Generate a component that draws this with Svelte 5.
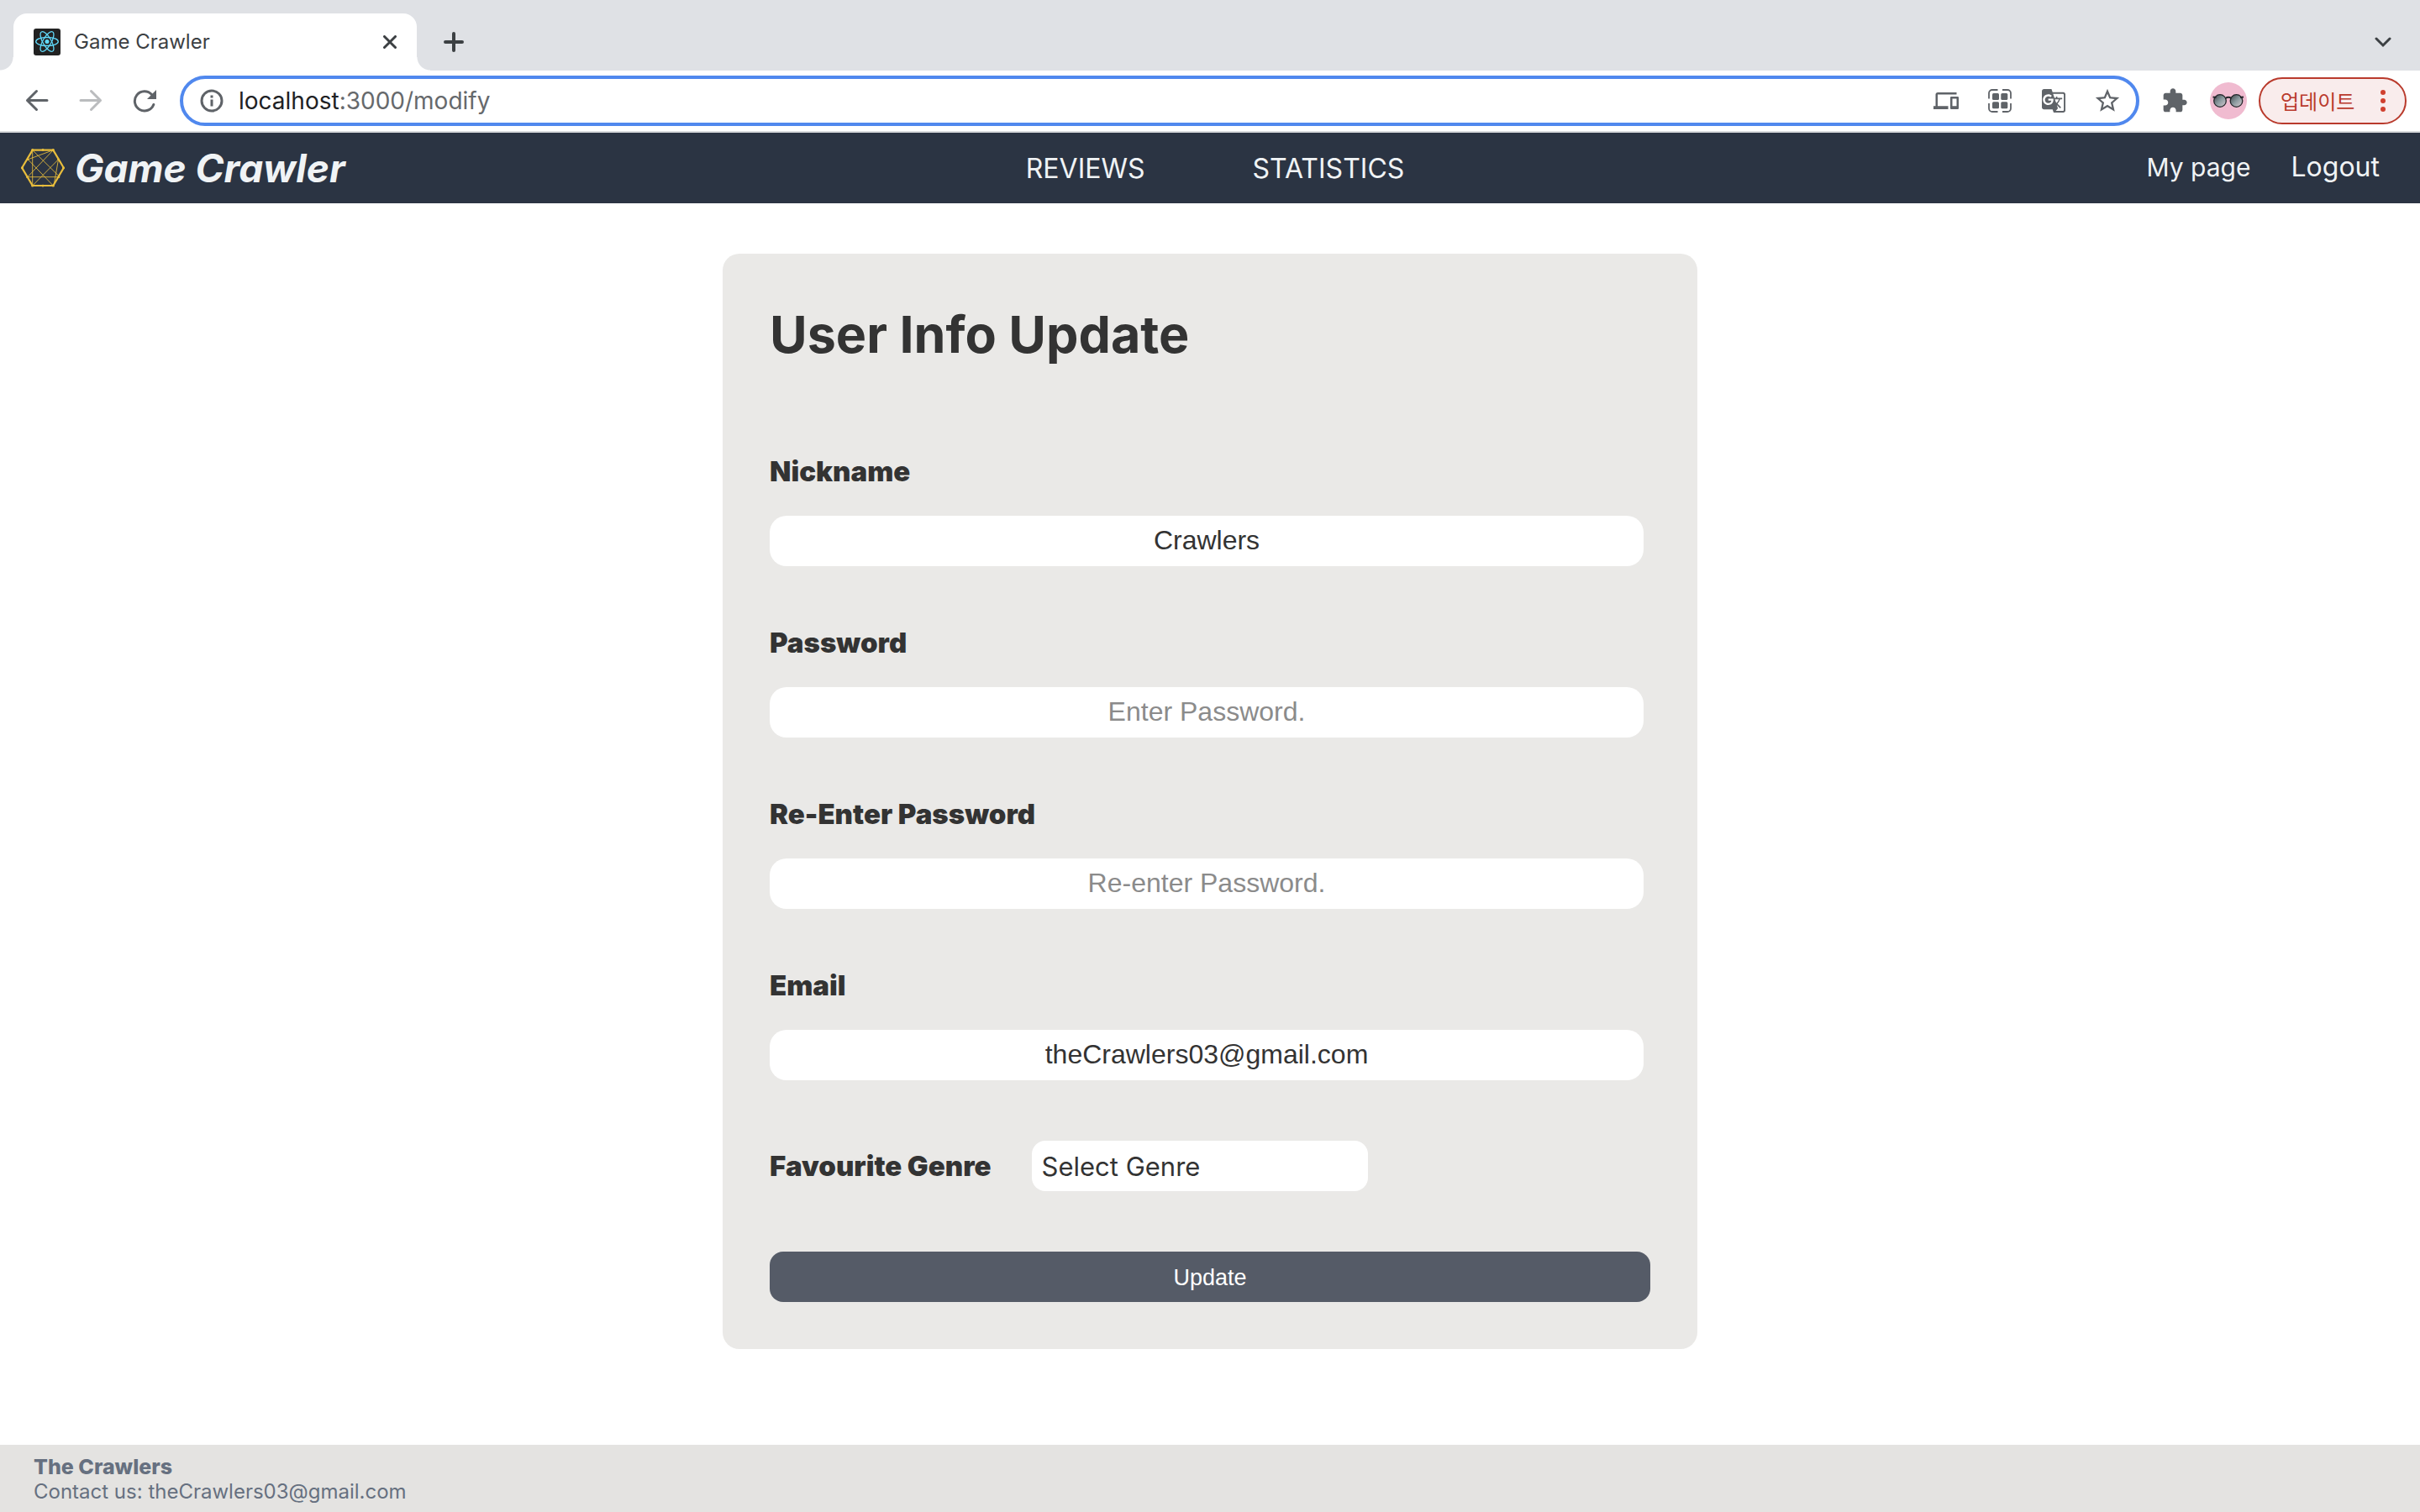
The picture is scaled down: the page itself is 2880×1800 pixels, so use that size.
<script lang="ts">
  let nickname = $state('Crawlers');
  let password = $state('');
  let passwordAgain = $state('');
  let email = $state('theCrawlers03@gmail.com');
  let genre = $state('');
  const genres = ['Action', 'Adventure', 'Puzzle', 'Strategy'];

  function submit(event: SubmitEvent) {
    event.preventDefault();
  }
</script>

<div class="window">
  <div class="tab-strip">
    <span class="curve left"></span>
    <div class="tab">
      <svg class="favicon" viewBox="0 0 32 32" aria-hidden="true">
        <rect width="32" height="32" rx="3" fill="#222" />
        <g fill="none" stroke="#61dafb" stroke-width="1.3">
          <ellipse cx="16" cy="15.5" rx="13.3" ry="5" />
          <ellipse cx="16" cy="15.5" rx="13.3" ry="5" transform="rotate(60 16 15.5)" />
          <ellipse cx="16" cy="15.5" rx="13.3" ry="5" transform="rotate(120 16 15.5)" />
        </g>
        <circle cx="16" cy="15.5" r="2.5" fill="#61dafb" />
      </svg>
      <span class="tab-title">Game Crawler</span>
      <button class="plain close" aria-label="Close tab">
        <svg width="16" height="16" viewBox="0 0 16 16"><path d="M1.5 1.5l13 13M14.5 1.5l-13 13" /></svg>
      </button>
    </div>
    <span class="curve right"></span>
    <button class="plain new-tab" aria-label="New tab">
      <svg width="24" height="24" viewBox="0 0 24 24"><path d="M12 2v20M2 12h20" /></svg>
    </button>
    <button class="plain tab-search" aria-label="Search tabs">
      <svg width="20" height="20" viewBox="0 0 20 20"><path d="M2 6l8 8 8-8" /></svg>
    </button>
  </div>

  <div class="toolbar">
    <div class="history">
      <button class="plain" aria-label="Back">
        <svg width="28" height="28" viewBox="0 0 28 28"><path class="line" d="M26 13.5H2.5M13.5 2.5l-11 11 11 11" /></svg>
      </button>
      <button class="plain forward" aria-label="Forward">
        <svg width="28" height="28" viewBox="0 0 28 28"><path class="line" d="M2 13.5h23.5M14.5 2.5l11 11-11 11" /></svg>
      </button>
      <button class="plain" aria-label="Reload">
        <svg width="28" height="28" viewBox="0 0 28 28">
          <path class="line" d="M22.5 6.5A11.6 11.6 0 1 0 24.8 18.5" />
          <path d="M28 1v11H17z" fill="#5f6368" />
        </svg>
      </button>
    </div>

    <div class="omnibox">
      <button class="plain info" aria-label="Site information">
        <svg width="28" height="28" viewBox="0 0 28 28">
          <circle class="line" cx="14" cy="14" r="12" />
          <path d="M12.5 7.5h3v3h-3zM12.5 12.5h3v8h-3z" fill="#5f6368" />
        </svg>
      </button>
      <div class="url"><span class="host">localhost</span>:3000/modify</div>
      <div class="page-actions">
        <button class="plain" aria-label="Send to your devices">
          <svg width="30" height="30" viewBox="0 0 24 24"><path fill="#5f6368" d="M4 6h18V4H4c-1.1 0-2 .9-2 2v11H0v3h14v-3H4V6zm19 2h-6c-.55 0-1 .45-1 1v10c0 .55.45 1 1 1h6c.55 0 1-.45 1-1V9c0-.55-.45-1-1-1zm-1 9h-4v-7h4v7z" /></svg>
        </button>
        <button class="plain" aria-label="Create QR code">
          <svg width="28" height="28" viewBox="0 0 28 28">
            <g fill="#5f6368">
              <rect x="5" y="5" width="8" height="8" rx="1.5" />
              <rect x="15.3" y="5" width="8" height="8" rx="1.5" />
              <rect x="5" y="15.3" width="8" height="8" rx="1.5" />
              <rect x="15.3" y="15.3" width="8" height="8" rx="1.5" />
            </g>
            <path fill="none" stroke="#5f6368" stroke-width="1.8" d="M11.5 1H5a4 4 0 0 0-4 4v6.5M17 1h6a4 4 0 0 1 4 4v6.5M11.5 27H5a4 4 0 0 1-4-4v-6M17 27h6a4 4 0 0 0 4-4v-6" />
          </svg>
        </button>
        <button class="plain" aria-label="Translate this page">
          <svg width="28" height="28" viewBox="1 1 22 22"><path fill="#5f6368" d="M21 4H11l-1-3H3c-1.1 0-2 .9-2 2v15c0 1.1.9 2 2 2h8l1 3h9c1.1 0 2-.9 2-2V6c0-1.1-.9-2-2-2zM7 16c-2.76 0-5-2.24-5-5s2.24-5 5-5c1.35 0 2.48.5 3.35 1.3L9.03 8.57c-.38-.36-1.04-.78-2.03-.78-1.74 0-3.15 1.44-3.15 3.21S5.26 14.21 7 14.21c2.01 0 2.84-1.44 2.92-2.41H7v-1.71h4.68c.07.31.12.61.12 1.02C11.8 13.97 9.89 16 7 16zm6.17-5.42h3.7c-.43 1.25-1.11 2.43-2.05 3.47-.31-.35-.6-.72-.86-1.1l-.79-2.37zm8.33 9.92c0 .55-.45 1-1 1H14l2-2.5-1.04-3.1 3.1 3.1.92-.92-3.3-3.25.02-.02c1.13-1.25 1.93-2.69 2.4-4.22H20v-1.3h-4.53V8h-1.29v1.29h-1.44L11.46 5.5h9.04c.55 0 1 .45 1 1v14z" /></svg>
        </button>
        <button class="plain" aria-label="Bookmark this page">
          <svg width="34" height="34" viewBox="0 0 24 24"><path fill="#5f6368" d="M22 9.24l-7.19-.62L12 2 9.19 8.63 2 9.24l5.46 4.73L5.82 21 12 17.27 18.18 21l-1.63-7.03L22 9.24zM12 15.4l-3.76 2.27 1-4.28-3.32-2.88 4.38-.38L12 6.1l1.71 4.04 4.38.38-3.32 2.88 1 4.28L12 15.4z" /></svg>
        </button>
      </div>
    </div>

    <button class="plain" aria-label="Extensions">
      <svg width="32" height="32" viewBox="0 0 24 24"><path fill="#5f6368" d="M20.5 11H19V7c0-1.1-.9-2-2-2h-4V3.5C13 2.12 11.88 1 10.5 1S8 2.12 8 3.5V5H4c-1.1 0-1.99.9-1.99 2v3.8H3.5c1.49 0 2.7 1.21 2.7 2.7s-1.21 2.7-2.7 2.7H2V20c0 1.1.9 2 2 2h3.8v-1.5c0-1.49 1.21-2.7 2.7-2.7 1.49 0 2.7 1.21 2.7 2.7V22H17c1.1 0 2-.9 2-2v-4h1.5c1.38 0 2.5-1.12 2.5-2.5S21.88 11 20.5 11z" /></svg>
    </button>
    <button class="plain avatar" aria-label="Profile">
      <svg width="44" height="44" viewBox="0 0 44 44">
        <defs>
          <linearGradient id="lens" x1="0" y1="0" x2="1" y2="1">
            <stop offset="0" stop-color="#3c4348" />
            <stop offset=".5" stop-color="#8b9a9f" />
            <stop offset="1" stop-color="#d9cdd3" />
          </linearGradient>
        </defs>
        <circle cx="22" cy="22" r="22" fill="#f0bbd0" />
        <g fill="url(#lens)" stroke="#23262a" stroke-width="1.3">
          <circle cx="12" cy="22" r="7.3" />
          <circle cx="31.5" cy="22" r="7.3" />
        </g>
        <path d="M3.5 17.5l4 .5M40 17.5l-4 .5M18.5 19q3.5-2.5 7 0" fill="none" stroke="#23262a" stroke-width="2" />
      </svg>
    </button>
    <button class="update-chip">
      <span>업데이트</span>
      <svg width="8" height="28" viewBox="0 0 8 28" aria-hidden="true">
        <circle cx="4" cy="4" r="3" /><circle cx="4" cy="14" r="3" /><circle cx="4" cy="24" r="3" />
      </svg>
    </button>
  </div>

  <header class="site-header">
    <a class="brand" href="/">
      <svg width="52" height="46" viewBox="0 0 52 46" fill="none" stroke="#e8bd3c" aria-hidden="true">
        <path stroke-width="2.2" d="M1.2 22.8L13.7 1.7h24.6L50.8 22.8 38.3 44H13.7z" />
        <path stroke-width="1" stroke-opacity=".85" d="M13.7 1.7V44M13.7 1.7L45.5 33M38.3 1.7L7 34.5M38.3 1.7L8.3 12.8M8.3 12.8L38.3 44M44.5 12.8L13.7 44M44.5 12.8L39.2 43M7.5 33.7h38" />
        <g fill="#e8bd3c" stroke="none">
          <circle cx="1.5" cy="22.8" r="1.5" /><circle cx="50.5" cy="22.8" r="1.5" />
          <circle cx="13.7" cy="1.7" r="1.6" /><circle cx="38.3" cy="1.7" r="1.6" />
          <circle cx="13.7" cy="44" r="1.6" /><circle cx="38.3" cy="44" r="1.6" />
          <circle cx="26" cy="1.5" r="1.4" /><circle cx="26" cy="44.2" r="1.4" />
          <circle cx="8.3" cy="12.8" r="1.3" /><circle cx="44.5" cy="12.8" r="1.3" />
          <circle cx="7.5" cy="33.7" r="1.3" /><circle cx="45" cy="33.7" r="1.3" />
        </g>
      </svg>
      <span>Game Crawler</span>
    </a>
    <nav class="main-nav">
      <a href="/reviews">REVIEWS</a>
      <a href="/statistics">STATISTICS</a>
    </nav>
    <nav class="account-nav">
      <a class="my-page" href="/mypage">My page</a>
      <a href="/logout">Logout</a>
    </nav>
  </header>

  <main>
    <form class="card" onsubmit={submit}>
      <h1>User Info Update</h1>
      <div class="fields">
        <div class="field">
          <label for="nickname">Nickname</label>
          <input id="nickname" type="text" bind:value={nickname} />
        </div>
        <div class="field">
          <label for="password">Password</label>
          <input id="password" type="password" placeholder="Enter Password." bind:value={password} />
        </div>
        <div class="field">
          <label for="password-again">Re-Enter Password</label>
          <input id="password-again" type="password" placeholder="Re-enter Password." bind:value={passwordAgain} />
        </div>
        <div class="field">
          <label for="email">Email</label>
          <input id="email" type="text" bind:value={email} />
        </div>
        <div class="genre">
          <label for="genre">Favourite Genre</label>
          <select id="genre" bind:value={genre}>
            <option value="">Select Genre</option>
            {#each genres as name}
              <option value={name}>{name}</option>
            {/each}
          </select>
        </div>
        <button class="submit" type="submit">Update</button>
      </div>
    </form>
  </main>

  <footer>
    <strong>The Crawlers</strong>
    <span>Contact us: theCrawlers03@gmail.com</span>
  </footer>
</div>

<style>
  :global(body) {
    background: #fff;
  }

  .window {
    display: flex;
    flex-direction: column;
    min-height: 100vh;
    font-family: Inter, 'Noto Sans CJK KR', sans-serif;
    color: #333;
  }

  .window :global(*) {
    box-sizing: border-box;
  }

  a {
    color: inherit;
    text-decoration: none;
  }

  svg {
    display: block;
    flex: none;
  }

  .plain {
    display: flex;
    align-items: center;
    justify-content: center;
    flex: none;
    width: 56px;
    height: 56px;
    padding: 0;
    border: 0;
    background: none;
  }

  /* Browser tab strip */
  .tab-strip {
    display: flex;
    align-items: flex-end;
    height: 84px;
    background: #dfe1e5;
  }

  .curve {
    flex: none;
    width: 16px;
    height: 16px;
  }

  .curve.left {
    background: radial-gradient(circle at 0 0, #dfe1e5 15px, #fff 16px);
  }

  .curve.right {
    background: radial-gradient(circle at 100% 0, #dfe1e5 15px, #fff 16px);
  }

  .tab {
    display: flex;
    align-items: center;
    width: 480px;
    height: 68px;
    padding: 0 12px 0 24px;
    border-radius: 16px 16px 0 0;
    background: #fff;
  }

  .favicon {
    width: 32px;
    height: 32px;
    margin-right: 16px;
  }

  .tab-title {
    flex: 1;
    font-size: 24px;
    line-height: 32px;
    color: #3c4043;
  }

  .tab-strip .plain {
    width: 40px;
    height: 68px;
  }

  .tab-strip .plain path {
    fill: none;
    stroke: #3c4043;
    stroke-width: 3;
    stroke-linecap: round;
  }

  .tab-strip .new-tab {
    margin-left: 8px;
  }

  .tab-strip .new-tab path {
    stroke-width: 4;
  }

  .tab-strip .tab-search {
    margin: 0 24px 0 auto;
  }

  /* Browser toolbar */
  .toolbar {
    display: flex;
    align-items: center;
    gap: 14px;
    height: 74px;
    padding: 0 16px;
    border-bottom: 2px solid #d8dadc;
    background: #fff;
  }

  .history {
    display: flex;
    gap: 8px;
  }

  .line {
    fill: none;
    stroke: #5f6368;
    stroke-width: 3;
    stroke-linecap: round;
    stroke-linejoin: round;
  }

  .forward .line {
    stroke: #babcbe;
  }

  .omnibox {
    display: flex;
    flex: 1;
    align-items: center;
    height: 60px;
    padding: 0 10px;
    border: 4px solid #5088ee;
    border-radius: 30px;
  }

  .omnibox .plain {
    width: 48px;
    height: 48px;
  }

  .url {
    flex: 1;
    padding-left: 8px;
    font-size: 28px;
    line-height: 36px;
    color: #66696c;
  }

  .host {
    color: #202124;
  }

  .page-actions {
    display: flex;
    gap: 16px;
  }

  .toolbar .avatar {
    width: 44px;
    height: 44px;
  }

  .update-chip {
    display: flex;
    align-items: center;
    justify-content: space-between;
    flex: none;
    width: 176px;
    height: 56px;
    padding: 0 22px 0 24px;
    border: 2px solid #b93a2c;
    border-radius: 28px;
    background: #f9ecec;
    color: #b93a2c;
    font-family: 'Noto Sans CJK KR', sans-serif;
    font-size: 24px;
    line-height: 32px;
  }

  .update-chip svg {
    fill: #d0402f;
  }

  /* Site header */
  .site-header {
    display: grid;
    grid-template-columns: 1fr auto 1fr;
    align-items: center;
    height: 84px;
    padding-left: 12px;
    background: #2b3443;
    color: #f0f3f5;
    font-size: 32px;
    line-height: 40px;
  }

  .brand {
    display: flex;
    align-items: center;
    gap: 12px;
    padding-left: 13px;
    font-size: 46px;
    font-style: italic;
    font-weight: 700;
    line-height: 56px;
  }

  .main-nav {
    display: flex;
    gap: 128px;
    padding-top: 2px;
  }

  .account-nav {
    display: flex;
    justify-content: flex-end;
    gap: 48px;
    padding-right: 48px;
    padding-bottom: 2px;
  }

  .my-page {
    font-size: 30px;
  }

  /* Update form */
  main {
    flex: 1;
    padding: 60px 40px;
  }

  .card {
    max-width: 1160px;
    margin: 0 auto;
    padding: 56px;
    border-radius: 20px;
    background: #eae9e7;
  }

  h1 {
    margin: 0 0 104px;
    font-size: 61px;
    font-weight: 700;
    line-height: 80px;
  }

  .fields {
    display: flex;
    flex-direction: column;
    gap: 72px;
  }

  .field {
    display: flex;
    flex-direction: column;
    gap: 34px;
    margin-right: 8px;
  }

  label {
    font-size: 33px;
    font-weight: 900;
    line-height: 38px;
  }

  input {
    width: 100%;
    height: 60px;
    padding: 0 12px 2px;
    border: 0;
    border-radius: 20px;
    background: #fff;
    color: #333;
    font-family: 'Liberation Sans', Arial, sans-serif;
    font-size: 32px;
    text-align: center;
  }

  input::placeholder {
    color: #8b8b8b;
    opacity: 1;
  }

  .genre {
    display: flex;
    align-items: center;
    gap: 48px;
  }

  select {
    width: 400px;
    height: 60px;
    padding: 0 12px;
    border: 0;
    border-radius: 16px;
    appearance: none;
    background: #fff;
    color: #333;
    font-family: Inter, sans-serif;
    font-size: 31px;
  }

  .submit {
    height: 60px;
    padding: 2px 0 0;
    border: 0;
    border-radius: 16px;
    background: #555b67;
    color: #fff;
    font-family: 'Liberation Sans', Arial, sans-serif;
    font-size: 27px;
  }

  footer {
    display: flex;
    flex-direction: column;
    padding: 11px 40px 9px;
    background: #e4e3e1;
    color: #667080;
    font-size: 24px;
    line-height: 30px;
  }

  footer strong {
    font-size: 25px;
    font-weight: 800;
  }
</style>
